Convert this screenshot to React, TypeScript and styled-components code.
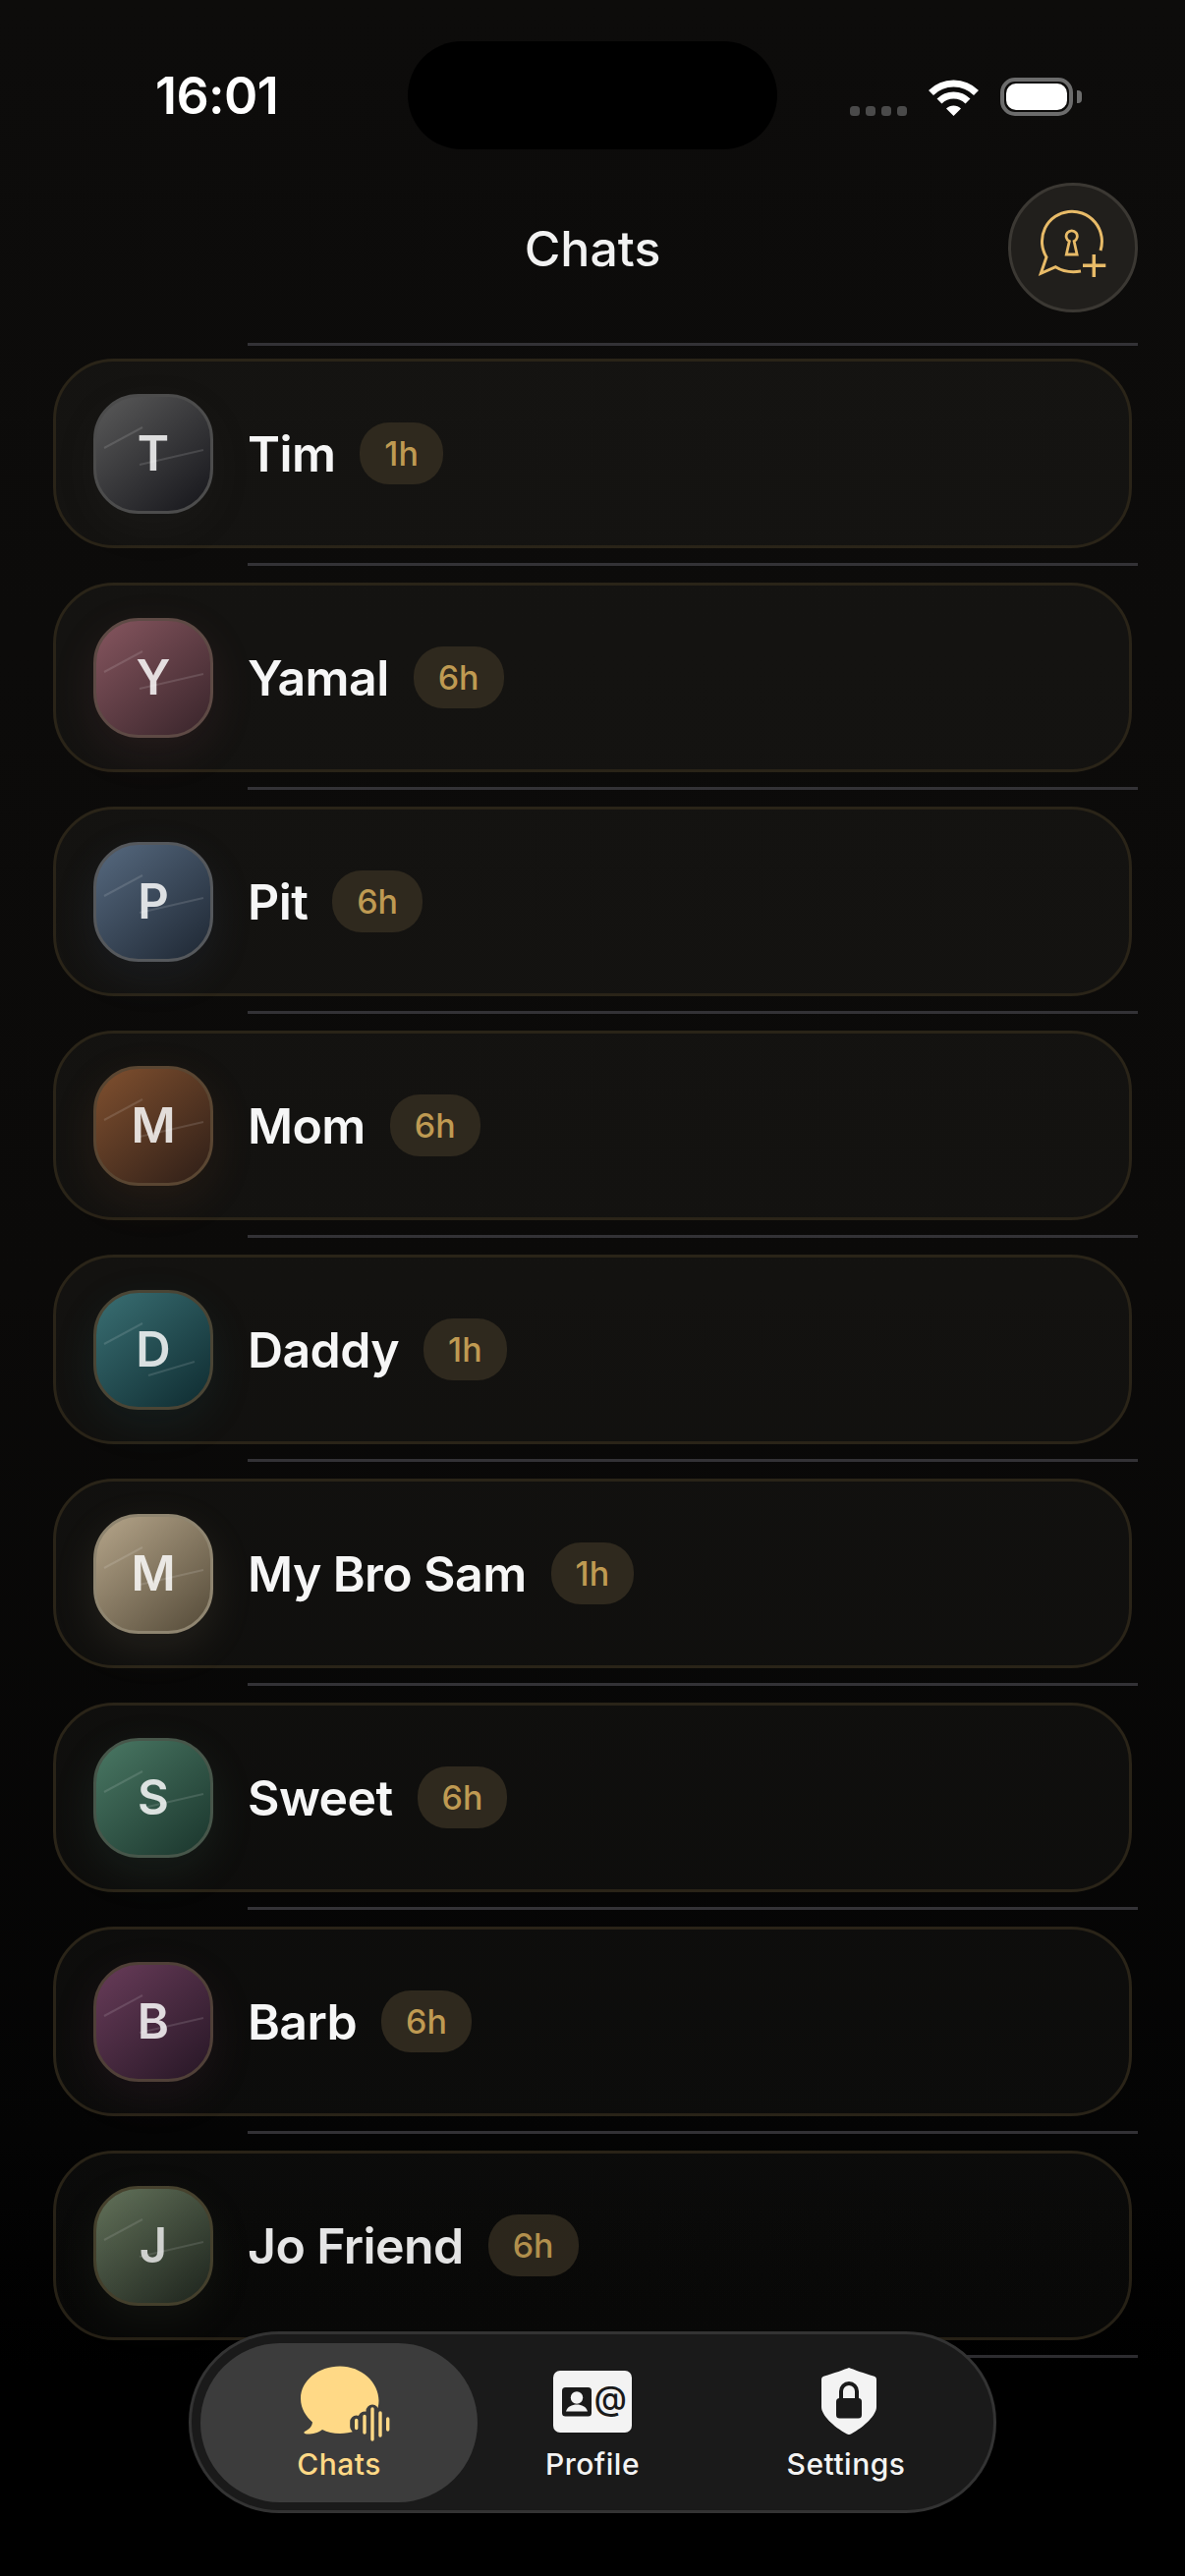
import React from 'react';
import styled, { createGlobalStyle } from 'styled-components';

const GlobalStyle = createGlobalStyle`
  html, body {
    margin: 0;
    padding: 0;
    background: #000;
  }
  * {
    box-sizing: border-box;
  }
`;

const Phone = styled.div`
  position: relative;
  width: 1206px;
  height: 2622px;
  overflow: hidden;
  background: linear-gradient(to bottom, #0d0c0b 0%, #0b0a09 50%, #040404 83%, #000 92%);
  font-family: Inter, 'Liberation Sans', sans-serif;
  color: #f5f5f5;
`;

const StatusBar = styled.div`
  display: grid;
  grid-template-columns: 415px 376px 1fr;
  padding-top: 42px;
  height: 152px;
`;

const Time = styled.div`
  padding-left: 158px;
  font-size: 52px;
  font-weight: 600;
  line-height: 112px;
  letter-spacing: -0.6px;
  color: #fff;
`;

const Island = styled.div`
  height: 110px;
  border-radius: 55px;
  background: #000;
`;

const StatusIcons = styled.div`
  display: flex;
  align-items: flex-end;
  padding: 0 0 36px 74px;
`;

const SignalDots = styled.div`
  display: flex;
  gap: 6px;
  margin-right: 22px;
`;

const SignalDot = styled.span`
  width: 10px;
  height: 10px;
  border-radius: 3.5px;
  background: #4a4a4a;
`;

const Battery = styled.div`
  position: relative;
  width: 74px;
  height: 39px;
  margin-left: 22px;
  padding: 2px;
  border: 4px solid #6c6c6c;
  border-radius: 15px;
  &::after {
    content: '';
    position: absolute;
    right: -13px;
    top: 9px;
    width: 5px;
    height: 13px;
    border-radius: 0 4px 4px 0;
    background: #6c6c6c;
  }
`;

const BatteryFill = styled.div`
  width: 100%;
  height: 100%;
  border-radius: 10px;
  background: #fff;
`;

const Header = styled.header`
  display: grid;
  grid-template-columns: 1fr auto 1fr;
  align-items: center;
  padding: 34px 48px 0;
`;

const Title = styled.h1`
  grid-column: 2;
  margin: 0;
  padding-top: 2px;
  font-size: 50px;
  font-weight: 500;
  line-height: 60px;
  color: #f2f2f2;
`;

const NewChatButton = styled.button`
  grid-column: 3;
  justify-self: end;
  display: flex;
  align-items: center;
  justify-content: center;
  width: 132px;
  height: 132px;
  padding: 0;
  border: 3px solid #3b3833;
  border-radius: 50%;
  background: #211f1c;
`;

const List = styled.div`
  padding-top: 31px;
`;

const Divider = styled.div`
  height: 3px;
  margin: 0 48px 17px 252px;
  background: #333236;
`;

const Row = styled.div`
  &:first-child ${Divider} {
    margin-bottom: 13px;
  }
`;

const Card = styled.div`
  display: flex;
  align-items: center;
  width: 1098px;
  height: 193px;
  margin: 0 0 15px 54px;
  padding-left: 38px;
  border: 3px solid #2a2418;
  border-radius: 62px;
  background: rgba(255, 245, 225, 0.037);
`;

const Avatar = styled.div<{ $from: string; $to: string; $edge: string; $glow: string }>`
  position: relative;
  display: flex;
  align-items: center;
  justify-content: center;
  flex: none;
  width: 122px;
  height: 122px;
  border: 3px solid ${(p) => p.$edge};
  border-radius: 46px;
  background: linear-gradient(140deg, ${(p) => p.$from}, ${(p) => p.$to});
  box-shadow: 0 14px 44px ${(p) => p.$glow};
  font-size: 49px;
  font-weight: 600;
  color: rgba(255, 255, 255, 0.83);
`;

const Streaks = styled.svg`
  position: absolute;
  left: -3px;
  top: -3px;
`;

const Initial = styled.span`
  position: relative;
`;

const Name = styled.div`
  margin-left: 35px;
  font-size: 50px;
  font-weight: 600;
  line-height: 60px;
  letter-spacing: -0.6px;
  color: #f6f6f6;
`;

const Badge = styled.div`
  display: flex;
  align-items: center;
  justify-content: center;
  height: 63px;
  margin-left: 25px;
  padding: 0 25px;
  border-radius: 30px;
  background: #2f291e;
  font-size: 34px;
  font-weight: 500;
  color: #bf9a52;
`;

const BottomFade = styled.div`
  position: absolute;
  left: 0;
  right: 0;
  top: 2100px;
  height: 340px;
  background: linear-gradient(to bottom, rgba(0, 0, 0, 0), rgba(0, 0, 0, 0.13));
  pointer-events: none;
`;

const TabBar = styled.nav`
  position: absolute;
  left: 192px;
  top: 2373px;
  display: grid;
  grid-template-columns: 282px 234px 282px;
  width: 822px;
  height: 185px;
  padding: 9px;
  border: 3px solid #333333;
  border-radius: 92px;
  background: #1a1a1a;
`;

const Tab = styled.div<{ $active?: boolean }>`
  display: flex;
  flex-direction: column;
  align-items: center;
  justify-content: flex-end;
  height: 162px;
  padding-bottom: 21px;
  border-radius: 82px;
  background: ${(p) => (p.$active ? '#3c3c3c' : 'transparent')};
  font-size: 30px;
  font-weight: 500;
  line-height: 36px;
  letter-spacing: 0.5px;
  color: ${(p) => (p.$active ? '#ffd986' : '#f3f3f3')};
`;

const TabIcon = styled.div`
  display: flex;
  align-items: center;
  justify-content: center;
  height: 84px;
  margin-bottom: 4px;
`;

const chats = [
  { name: 'Tim', age: '1h', from: '#5a5a5a', to: '#15151a', edge: '#4c4c4c', glow: 'rgba(90,90,90,0.08)' },
  { name: 'Yamal', age: '6h', from: '#86565f', to: '#38242a', edge: '#5e4a45', glow: 'rgba(140,80,95,0.14)' },
  { name: 'Pit', age: '6h', from: '#56697f', to: '#1e2733', edge: '#55585c', glow: 'rgba(80,110,150,0.12)' },
  { name: 'Mom', age: '6h', from: '#80502f', to: '#2e1e17', edge: '#5a4632', glow: 'rgba(140,85,50,0.14)' },
  {
    name: 'Daddy',
    age: '1h',
    from: '#3a6f73',
    to: '#0e2b30',
    edge: '#4a4535',
    glow: 'rgba(40,115,125,0.12)',
    streak: 'M56 87 103 73',
  },
  { name: 'My Bro Sam', age: '1h', from: '#b5a58a', to: '#544a38', edge: '#8f8570', glow: 'rgba(180,165,135,0.12)' },
  { name: 'Sweet', age: '6h', from: '#4a7864', to: '#1a352c', edge: '#47564a', glow: 'rgba(75,125,105,0.14)' },
  { name: 'Barb', age: '6h', from: '#683c59', to: '#261625', edge: '#504038', glow: 'rgba(110,60,95,0.14)' },
  { name: 'Jo Friend', age: '6h', from: '#68785f', to: '#20271f', edge: '#4a4530', glow: 'rgba(105,125,100,0.1)' },
];

const WifiIcon = () => (
  <svg width="51" height="38" viewBox="0 0 51 38" fill="none" stroke="#fff" strokeWidth="7">
    <path d="M2.5 14.5a32.5 32.5 0 0 1 46 0" />
    <path d="M11 23a20.5 20.5 0 0 1 29 0" />
    <path d="M18 30.5l7.5 7.5 7.5-7.5a10.6 10.6 0 0 0-15 0z" fill="#fff" stroke="none" />
  </svg>
);

const NewChatIcon = () => (
  <svg width="126" height="126" viewBox="3 3 126 126" fill="none" stroke="#e8bb68" strokeWidth="2.800">
    <path d="M94 69A30.500 30.500 0 1 0 39 75.700L33.300 92.300 48.300 85.700C56 90.500 65 91.500 74 90" strokeWidth="3" />
    <path d="M76 84.300H99.300M87.300 73V96" strokeWidth="3.500" />
    <path d="M59.300 73l3-13.500a5.600 5.600 0 1 1 4.800 0l3 13.500z" />
  </svg>
);

const AvatarStreaks = ({ streak }: { streak?: string }) => (
  <Streaks width="122" height="122" viewBox="0 0 122 122" fill="none" stroke="rgba(255,255,255,0.13)" strokeWidth="2">
    <path d="M11 55 50 34" />
    <path d={streak || 'M47 72 112 57'} />
  </Streaks>
);

const ChatsIcon = () => (
  <svg width="110" height="90" viewBox="-10 -6 110 90" fill="none">
    <path
      d="M46 3.500C24 3.500 6 18 6 36.500 6 47 12 55 18 60.500 17.500 65 15 67.500 10 70c-1.500 1 0 2.500 3 2.500 6 0 10-1 15-4.500 5 2.500 11 4 18 4 22 0 39.500-15 39.500-33.500S68 3.500 46 3.500z"
      fill="#ffd986"
    />
    <g stroke="#3c3c3c" strokeWidth="13" strokeLinecap="round">
      <path d="M62.700 60V65M71 56V70M79 49V76M87 53V72" />
    </g>
    <g stroke="#ffd986" strokeWidth="3.400" strokeLinecap="round">
      <path d="M62.700 58.500V66.500M71 54.500V71M79 47V78M87 51V74M94.700 57V68" />
    </g>
  </svg>
);

const ProfileIcon = () => (
  <svg width="80" height="63" viewBox="0 0 80 63">
    <rect width="80" height="63" rx="7" fill="#f3f3f3" />
    <rect x="9" y="17" width="30" height="29.500" rx="3.500" fill="#1a1a1a" />
    <circle cx="24" cy="27.500" r="6.200" fill="#f3f3f3" />
    <path d="M13 41.500c1.500-5 6-7 11-7s9.500 2 11 7z" fill="#f3f3f3" />
    <text x="58.500" y="40" fontFamily="Inter, sans-serif" fontSize="34" fontWeight="500" textAnchor="middle" fill="#1a1a1a">@</text>
  </svg>
);

const SettingsIcon = () => (
  <svg width="62" height="68" viewBox="-6 0 62 68">
    <path
      d="M28 0C32 1.500 44 6 53 8.500 55 9 56 10 56 12V40C56 48 44 60 30 67.500 28.500 68.200 27.500 68.200 26 67.500 12 60 0 48 0 40V12C0 10 1 9 3 8.500 12 6 24 1.500 28 0z"
      fill="#f3f3f3"
    />
    <rect x="15" y="31" width="26" height="20.500" rx="3.500" fill="#1a1a1a" />
    <path d="M20 33V24a8 8 0 0 1 16 0V33" fill="none" stroke="#1a1a1a" strokeWidth="4" />
  </svg>
);

const App: React.FC = () => {
  return (
    <Phone>
      <GlobalStyle />
      <StatusBar>
        <Time>16:01</Time>
        <Island />
        <StatusIcons>
          <SignalDots>
            {[0, 1, 2, 3].map((i) => (
              <SignalDot key={i} />
            ))}
          </SignalDots>
          <WifiIcon />
          <Battery>
            <BatteryFill />
          </Battery>
        </StatusIcons>
      </StatusBar>

      <Header>
        <Title>Chats</Title>
        <NewChatButton aria-label="New chat">
          <NewChatIcon />
        </NewChatButton>
      </Header>

      <List>
        {chats.map((chat) => (
          <Row key={chat.name}>
            <Divider />
            <Card>
              <Avatar $from={chat.from} $to={chat.to} $edge={chat.edge} $glow={chat.glow}>
                <AvatarStreaks streak={chat.streak} />
                <Initial>{chat.name[0]}</Initial>
              </Avatar>
              <Name>{chat.name}</Name>
              <Badge>{chat.age}</Badge>
            </Card>
          </Row>
        ))}
        <Divider />
      </List>

      <BottomFade />

      <TabBar>
        <Tab $active>
          <TabIcon>
            <ChatsIcon />
          </TabIcon>
          Chats
        </Tab>
        <Tab>
          <TabIcon>
            <ProfileIcon />
          </TabIcon>
          Profile
        </Tab>
        <Tab>
          <TabIcon>
            <SettingsIcon />
          </TabIcon>
          Settings
        </Tab>
      </TabBar>
    </Phone>
  );
};

export default App;
